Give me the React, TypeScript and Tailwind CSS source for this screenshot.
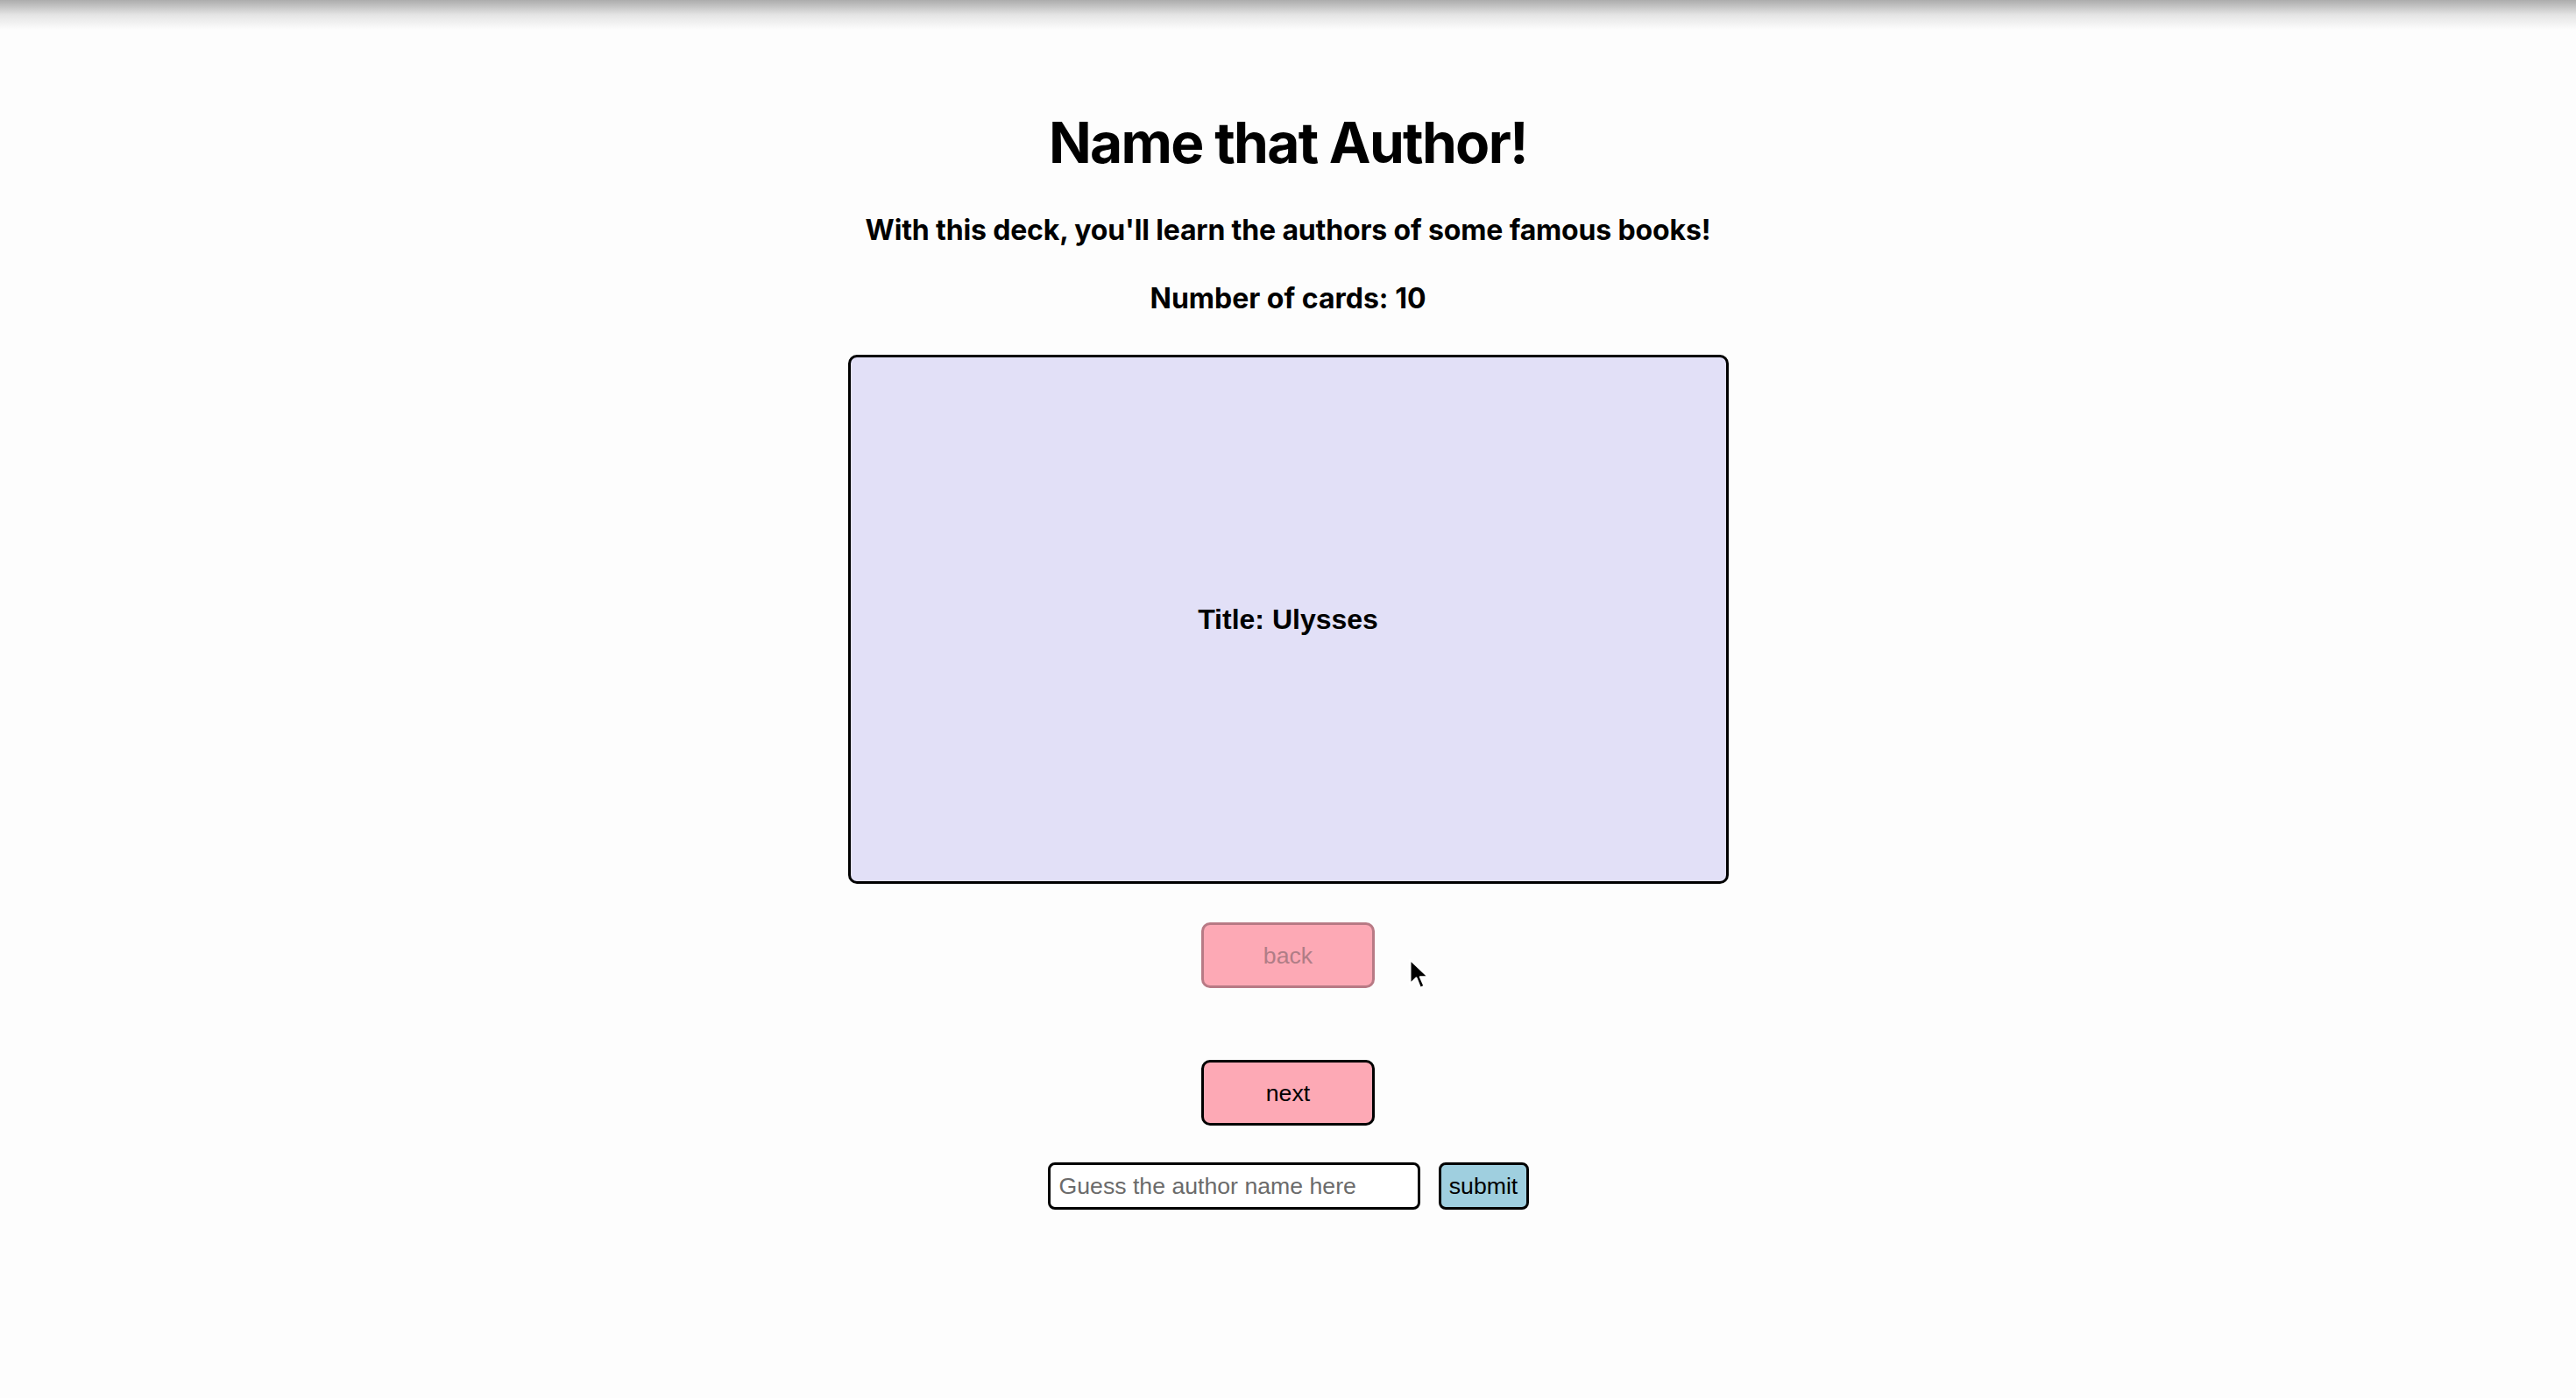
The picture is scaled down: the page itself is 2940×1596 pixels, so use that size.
import React from "react";

export default function App() {
  return (
    <div className="relative min-h-screen w-full bg-[#fdfdfd] flex flex-col items-center font-['Liberation_Sans',Arial,sans-serif] text-black">
      <div className="h-[34px] w-full bg-gradient-to-b from-[#acacac] via-[#e4e4e4] to-[#fdfdfd]" />

      <h1 className="mt-[90px] text-[64px] leading-[77px] font-bold font-['Inter',sans-serif] tracking-[-1.7px]">
        Name that Author!
      </h1>
      <h3 className="mt-[42px] text-[32px] leading-[39px] font-bold font-['Inter',sans-serif] tracking-[-0.15px]">
        With this deck, you'll learn the authors of some famous books!
      </h3>
      <h4 className="mt-[40px] text-[32px] leading-[37px] font-bold font-['Inter',sans-serif]">
        Number of cards: 10
      </h4>

      <div className="mt-[46px] w-[1005px] h-[604px] rounded-[10px] border-[3px] border-black bg-[#e2e0f7] flex items-center justify-center">
        <span className="text-[32px] font-bold">Title: Ulysses</span>
      </div>

      <button
        disabled
        className="mt-[44px] w-[198px] h-[75px] rounded-[10px] border-[3px] border-[#b87a85] bg-[#fda9b5] text-[26.67px] leading-[30px] text-[#b07d86]"
      >
        back
      </button>
      <button className="mt-[82px] w-[198px] h-[75px] rounded-[10px] border-[3px] border-black bg-[#fda9b5] text-[26.67px] leading-[30px] text-black">
        next
      </button>

      <div className="mt-[42px] flex items-center gap-[21px]">
        <input
          type="text"
          placeholder="Guess the author name here"
          className="w-[425px] h-[54px] rounded-[8px] border-[3px] border-black bg-white px-[10px] text-[26.67px] placeholder:text-[#6b6b6b] outline-none"
        />
        <button className="w-[103px] h-[54px] rounded-[8px] border-[3px] border-black bg-[#9fcfdf] text-[26.67px]">
          submit
        </button>
      </div>

      <svg
        className="absolute left-[1607px] top-[1093px]"
        width="28"
        height="40"
        viewBox="0 0 24 34"
      >
        <path d="M2 2 L2 26 L8 20 L12 30 L16 28 L12 19 L20 19 Z" fill="#000" stroke="#fff" strokeWidth="2" strokeLinejoin="round" />
      </svg>
    </div>
  );
}
